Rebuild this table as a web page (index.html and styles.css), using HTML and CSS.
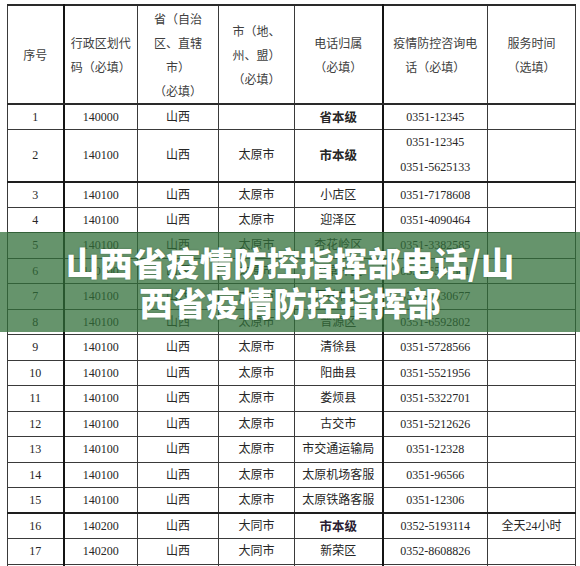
FILE: index.html
```html
<!DOCTYPE html>
<html lang="zh">
<head>
<meta charset="utf-8">
<title>山西省疫情防控指挥部电话</title>
<link rel="stylesheet" href="styles.css">
</head>
<body>
<div class="page">
  <table class="sheet">
    <colgroup>
      <col class="c1"><col class="c2"><col class="c3"><col class="c4"><col class="c5"><col class="c6"><col class="c7">
    </colgroup>
    <thead>
      <tr class="head">
        <th class="thick-r">序号</th>
        <th>行政区划代<br>码（必填）</th>
        <th>省（自治<br>区、直辖<br>市）<br>（必填）</th>
        <th>市（地、<br>州、盟）<br>（必填）</th>
        <th class="thick-r">电话归属<br>（必填）</th>
        <th>疫情防控咨询电<br>话（必填）</th>
        <th>服务时间<br>（选填）</th>
      </tr>
    </thead>
    <tbody>
      <tr><td class="thick-r">1</td><td>140000</td><td>山西</td><td></td><td class="thick-r b">省本级</td><td>0351-12345</td><td></td></tr>
      <tr class="tall"><td class="thick-r">2</td><td>140100</td><td>山西</td><td>太原市</td><td class="thick-r b">市本级</td><td class="two">0351-12345<br>0351-5625133</td><td></td></tr>
      <tr class="sep"><td class="thick-r">3</td><td>140100</td><td>山西</td><td>太原市</td><td class="thick-r">小店区</td><td>0351-7178608</td><td></td></tr>
      <tr><td class="thick-r">4</td><td>140100</td><td>山西</td><td>太原市</td><td class="thick-r">迎泽区</td><td>0351-4090464</td><td></td></tr>
      <tr><td class="thick-r">5</td><td>140100</td><td>山西</td><td>太原市</td><td class="thick-r">杏花岭区</td><td>0351-3382585</td><td></td></tr>
      <tr><td class="thick-r">6</td><td>140100</td><td>山西</td><td>太原市</td><td class="thick-r">尖草坪区</td><td>0351-6521301</td><td></td></tr>
      <tr><td class="thick-r">7</td><td>140100</td><td>山西</td><td>太原市</td><td class="thick-r">万柏林区</td><td>0351-6630677</td><td></td></tr>
      <tr><td class="thick-r">8</td><td>140100</td><td>山西</td><td>太原市</td><td class="thick-r">晋源区</td><td>0351-6592802</td><td></td></tr>
      <tr><td class="thick-r">9</td><td>140100</td><td>山西</td><td>太原市</td><td class="thick-r">清徐县</td><td>0351-5728566</td><td></td></tr>
      <tr><td class="thick-r">10</td><td>140100</td><td>山西</td><td>太原市</td><td class="thick-r">阳曲县</td><td>0351-5521956</td><td></td></tr>
      <tr><td class="thick-r">11</td><td>140100</td><td>山西</td><td>太原市</td><td class="thick-r">娄烦县</td><td>0351-5322701</td><td></td></tr>
      <tr><td class="thick-r">12</td><td>140100</td><td>山西</td><td>太原市</td><td class="thick-r">古交市</td><td>0351-5212626</td><td></td></tr>
      <tr><td class="thick-r">13</td><td>140100</td><td>山西</td><td>太原市</td><td class="thick-r">市交通运输局</td><td>0351-12328</td><td></td></tr>
      <tr><td class="thick-r">14</td><td>140100</td><td>山西</td><td>太原市</td><td class="thick-r">太原机场客服</td><td>0351-96566</td><td></td></tr>
      <tr><td class="thick-r">15</td><td>140100</td><td>山西</td><td>太原市</td><td class="thick-r">太原铁路客服</td><td>0351-12306</td><td></td></tr>
      <tr class="sep"><td class="thick-r">16</td><td>140200</td><td>山西</td><td>大同市</td><td class="thick-r b dark">市本级</td><td>0352-5193114</td><td>全天24小时</td></tr>
      <tr><td class="thick-r">17</td><td>140200</td><td>山西</td><td>大同市</td><td class="thick-r">新荣区</td><td>0352-8608826</td><td></td></tr>
      <tr><td class="thick-r"></td><td></td><td></td><td></td><td class="thick-r"></td><td></td><td></td></tr>
    </tbody>
  </table>
  <div class="banner">
    <h1 class="banner-title">山西省疫情防控指挥部电话/山<br>西省疫情防控指挥部</h1>
  </div>
</div>
</body>
</html>
```

FILE: styles.css
```css
html, body {
  margin: 0;
  padding: 0;
  background: #ffffff;
}

.page {
  position: relative;
  width: 580px;
  height: 566px;
  overflow: hidden;
  padding: 4px 0 0 7px;
  box-sizing: border-box;
}

.sheet {
  border-collapse: collapse;
  table-layout: fixed;
  width: 568px;
  font-family: "Liberation Serif", "Noto Sans CJK SC", serif;
  font-size: 12px;
  color: #262626;
}

.c1 { width: 56px; }
.c2 { width: 74px; }
.c3 { width: 81px; }
.c4 { width: 76px; }
.c5 { width: 88px; }
.c6 { width: 105px; }
.c7 { width: 88px; }

.sheet th,
.sheet td {
  border: 1px solid #3a3a3a;
  text-align: center;
  vertical-align: middle;
  padding: 0;
  white-space: nowrap;
  overflow: hidden;
}

.sheet th {
  font-family: "Noto Sans CJK SC", sans-serif;
  font-weight: normal;
  color: #404040;
  line-height: 24px;
  font-size: 12px;
}

.head {
  height: 99px;
}

.head th {
  border-top: 2px solid #2a2a2a;
  border-bottom: 2px solid #2a2a2a;
}

.sheet tbody tr {
  height: 25.5px;
}

.sheet tbody tr.tall {
  height: 52px;
}

.sheet td {
  line-height: 16px;
}

.sheet td.two {
  line-height: 25px;
}

.sheet tr.sep td {
  border-top: 2px solid #1e1e1e;
}

.sheet .thick-r {
  border-right: 2px solid #141414;
}

.b {
  font-weight: bold;
  font-family: "Noto Sans CJK SC", sans-serif;
  font-size: 12.5px;
}

.dark {
  color: #2b1d33;
}

.banner {
  position: absolute;
  left: 0;
  top: 232px;
  width: 580px;
  height: 100px;
  background: rgba(48, 110, 56, 0.74);
  display: flex;
  align-items: center;
  justify-content: center;
}

.banner-title {
  margin: 0;
  font-family: "Noto Sans CJK SC", sans-serif;
  font-weight: 900;
  font-size: 33.5px;
  line-height: 40px;
  color: #ffffff;
  text-align: center;
  letter-spacing: 0;
  text-shadow: 0 0 2px rgba(0, 40, 0, 0.35);
}
```
